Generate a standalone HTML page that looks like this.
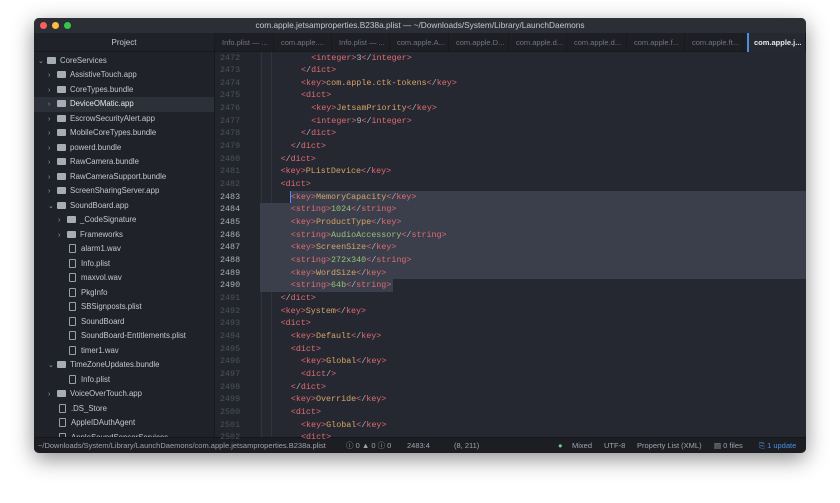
<!DOCTYPE html>
<html><head><meta charset="utf-8"><style>
*{margin:0;padding:0;box-sizing:border-box}
body{width:840px;height:503px;background:#fff;position:relative;overflow:hidden;font-family:"Liberation Sans",sans-serif}
#win{position:absolute;left:34px;top:18px;width:772px;height:435px;background:#22252c;border-radius:5px;overflow:hidden;box-shadow:0 6px 22px rgba(0,0,0,.45)}
#title{position:absolute;left:0;top:0;width:772px;height:15px;background:#2b2e35;color:#c5c8ce;font-size:8.3px;text-align:center;line-height:15px}
.dot{position:absolute;top:4px;width:7px;height:7px;border-radius:50%}
#side{position:absolute;left:0;top:15px;width:181px;height:404px;background:#1f2228;border-right:1px solid #181a1f;overflow:hidden}
#side .hd{height:19px;line-height:19px;text-align:center;color:#c9ccd2;font-size:8px;border-bottom:1px solid #17191d}
.r{position:absolute;height:14.5px;line-height:14.5px;font-size:7.8px;color:#c4c7cc;white-space:nowrap;width:181px}
.r.sel{background:#2c3038;color:#e6e8ea}
.ar{display:inline-block;width:9px;color:#9aa0a8;font-size:7px}
.fd{display:inline-block;width:9px;height:7px;background:#a7adb5;margin-right:4px;vertical-align:-1px;border-radius:1px}
.fl{display:inline-block;width:7px;height:9px;border:1px solid #9aa0a8;margin-right:5px;vertical-align:-2px;border-radius:1px}
#tabs{position:absolute;left:181px;top:15px;width:591px;height:19px;background:#1d1f24;border-bottom:1px solid #17191d}
.t{position:absolute;top:0;height:19px;line-height:19px;font-size:7.5px;color:#71767e;padding-left:7px;border-right:1px solid #17191d;white-space:nowrap}
.t.a{background:#262931;color:#e8eaec;font-weight:bold;border-left:2px solid #4a90d9}
#gut{position:absolute;left:181px;top:34px;width:45px;height:385px;background:#22252c}
#code{position:absolute;left:226px;top:34px;width:546px;height:385px;background:#252830}
.ln{position:absolute;left:186px;font-family:"Liberation Mono",monospace;font-size:8.4px;color:#4c515a;height:12.66px;line-height:12.66px}
.ln.h{color:#a9aeb6}
.cl{position:absolute;font-family:"Liberation Mono",monospace;font-size:8.4px;height:12.66px;line-height:12.66px;white-space:pre;color:#abb2bf}
.hl{position:absolute;background:#3a3f4b;height:12.66px}
.k{color:#e06c75}.v{color:#d7a468}.s{color:#98c379}
.g{position:absolute;width:1px;background:#30343c}
#status{position:absolute;left:0;top:419px;width:772px;height:16px;background:#1c1e23;border-top:1px solid #15171b;font-size:7.5px;color:#9ea3ab;line-height:15px;white-space:nowrap}
#status span{position:absolute;top:0}
</style></head><body>
<div id="win">
<div id="title">com.apple.jetsamproperties.B238a.plist — ~/Downloads/System/Library/LaunchDaemons
<div class="dot" style="left:6px;background:#fc605c"></div><div class="dot" style="left:18px;background:#fdbc40"></div><div class="dot" style="left:30px;background:#34c84a"></div></div>
<div id="side"><div class="hd">Project</div></div>
<div id="tabs">
<div class="t" style="left:0;width:59px">Info.plist — ...</div>
<div class="t" style="left:59px;width:58px">com.apple....</div>
<div class="t" style="left:117px;width:58px">Info.plist — ...</div>
<div class="t" style="left:175px;width:59px">com.apple.A...</div>
<div class="t" style="left:234px;width:60px">com.apple.D...</div>
<div class="t" style="left:294px;width:58px">com.apple.d...</div>
<div class="t" style="left:352px;width:60px">com.apple.d...</div>
<div class="t" style="left:412px;width:58px">com.apple.f...</div>
<div class="t" style="left:470px;width:58px">com.apple.ft...</div>
<div class="t a" style="left:532px;width:59px;padding-left:5px">com.apple.j...</div>
</div>
<div id="gut"></div><div id="code"></div>
<div class="g" style="left:227px;top:34px;height:385px"></div>
<div class="g" style="left:237px;top:34px;height:385px"></div>
<div id="status">
<span style="left:4px">~/Downloads/System/Library/LaunchDaemons/com.apple.jetsamproperties.B238a.plist</span>
<span style="left:312px">ⓘ 0 ▲ 0 ⓘ 0</span>
<span style="left:373px">2483:4</span>
<span style="left:420px">(8, 211)</span>
<span style="left:524px;color:#73c990">●</span>
<span style="left:538px">Mixed</span>
<span style="left:570px">UTF-8</span>
<span style="left:603px">Property List (XML)</span>
<span style="left:680px">▤ 0 files</span>
<span style="left:725px;color:#4a90e2">⎘ 1 update</span>
</div>
</div>
<script>
var side=document.getElementById('side');
var items=[
[0,'v','d','CoreServices'],[1,'>','d','AssistiveTouch.app'],[1,'>','d','CoreTypes.bundle'],[1,'>','d','DeviceOMatic.app',1],[1,'>','d','EscrowSecurityAlert.app'],[1,'>','d','MobileCoreTypes.bundle'],[1,'>','d','powerd.bundle'],[1,'>','d','RawCamera.bundle'],[1,'>','d','RawCameraSupport.bundle'],[1,'>','d','ScreenSharingServer.app'],[1,'v','d','SoundBoard.app'],[2,'>','d','_CodeSignature'],[2,'>','d','Frameworks'],[2,'','f','alarm1.wav'],[2,'','f','Info.plist'],[2,'','f','maxvol.wav'],[2,'','f','PkgInfo'],[2,'','f','SBSignposts.plist'],[2,'','f','SoundBoard'],[2,'','f','SoundBoard-Entitlements.plist'],[2,'','f','timer1.wav'],[1,'v','d','TimeZoneUpdates.bundle'],[2,'','f','Info.plist'],[1,'>','d','VoiceOverTouch.app'],[1,'','f','.DS_Store'],[1,'','f','AppleIDAuthAgent'],[1,'','f','AppleSoundSensorServices']];
var h='';
items.forEach(function(it,i){var pad=4+it[0]*10+(it[1]==''?11:0);
h+='<div class="r'+(it[4]?' sel':'')+'" style="top:'+(20.5+i*14.5)+'px;padding-left:'+pad+'px">'+(it[1]?'<span class="ar">'+(it[1]=='v'?'⌄':'›')+'</span>':'')+'<span class="'+(it[2]=='d'?'fd':'fl')+'"></span>'+it[3]+'</div>';});
side.insertAdjacentHTML('beforeend',h);
var L=[
[6,'<<k>integer</k>>3</<k>integer</k>>'],[5,'</<k>dict</k>>'],[5,'<<k>key</k>><v>com.apple.ctk-tokens</v></<k>key</k>>'],[5,'<<k>dict</k>>'],[6,'<<k>key</k>><v>JetsamPriority</v></<k>key</k>>'],[6,'<<k>integer</k>>9</<k>integer</k>>'],[5,'</<k>dict</k>>'],[4,'</<k>dict</k>>'],[3,'</<k>dict</k>>'],[3,'<<k>key</k>><v>PListDevice</v></<k>key</k>>'],[3,'<<k>dict</k>>'],
[4,'<<k>key</k>><v>MemoryCapacity</v></<k>key</k>>'],[4,'<<k>string</k>><s>1024</s></<k>string</k>>'],[4,'<<k>key</k>><v>ProductType</v></<k>key</k>>'],[4,'<<k>string</k>><s>AudioAccessory</s></<k>string</k>>'],[4,'<<k>key</k>><v>ScreenSize</v></<k>key</k>>'],[4,'<<k>string</k>><s>272x340</s></<k>string</k>>'],[4,'<<k>key</k>><v>WordSize</v></<k>key</k>>'],[4,'<<k>string</k>><s>64b</s></<k>string</k>>'],
[3,'</<k>dict</k>>'],[3,'<<k>key</k>><v>System</v></<k>key</k>>'],[3,'<<k>dict</k>>'],[4,'<<k>key</k>><v>Default</v></<k>key</k>>'],[4,'<<k>dict</k>>'],[5,'<<k>key</k>><v>Global</v></<k>key</k>>'],[5,'<<k>dict</k>/>'],[4,'</<k>dict</k>>'],[4,'<<k>key</k>><v>Override</v></<k>key</k>>'],[4,'<<k>dict</k>>'],[5,'<<k>key</k>><v>Global</v></<k>key</k>>'],[5,'<<k>dict</k>>']];
var w=document.getElementById('win');var c='';
L.forEach(function(l,i){var n=2472+i;var top=34+i*12.66-0.5;var hi=n>=2483&&n<=2490;
if(hi){var left=n==2483?256:226;c+='<div class="hl" style="left:'+left+'px;top:'+top+'px;width:'+(n==2490?359-226:772-left)+'px"></div>';}
var x=l[1].replace(/<k>/g,'@K').replace(/<\/k>/g,'@E').replace(/<v>/g,'@V').replace(/<\/v>/g,'@E').replace(/<s>/g,'@S').replace(/<\/s>/g,'@E');
x=x.replace(/</g,'&lt;').replace(/>/g,'&gt;');
x=x.replace(/&lt;/g,'<span class="k">&lt;</span>').replace(/&gt;/g,'<span class="k">&gt;</span>');
x=x.replace(/@K/g,'<span class="k">').replace(/@V/g,'<span class="v">').replace(/@S/g,'<span class="s">').replace(/@E/g,'</span>');
c+='<div class="ln'+(hi?' h':'')+'" style="top:'+top+'px">'+n+'</div>';
c+='<div class="cl" style="top:'+top+'px;left:'+(216+l[0]*10.2)+'px">'+x+'</div>';});
w.insertAdjacentHTML('beforeend',c);
w.insertAdjacentHTML('beforeend','<div style="position:absolute;left:256px;top:173px;width:1px;height:12px;background:#528bff"></div>');
</script>
</body></html>
